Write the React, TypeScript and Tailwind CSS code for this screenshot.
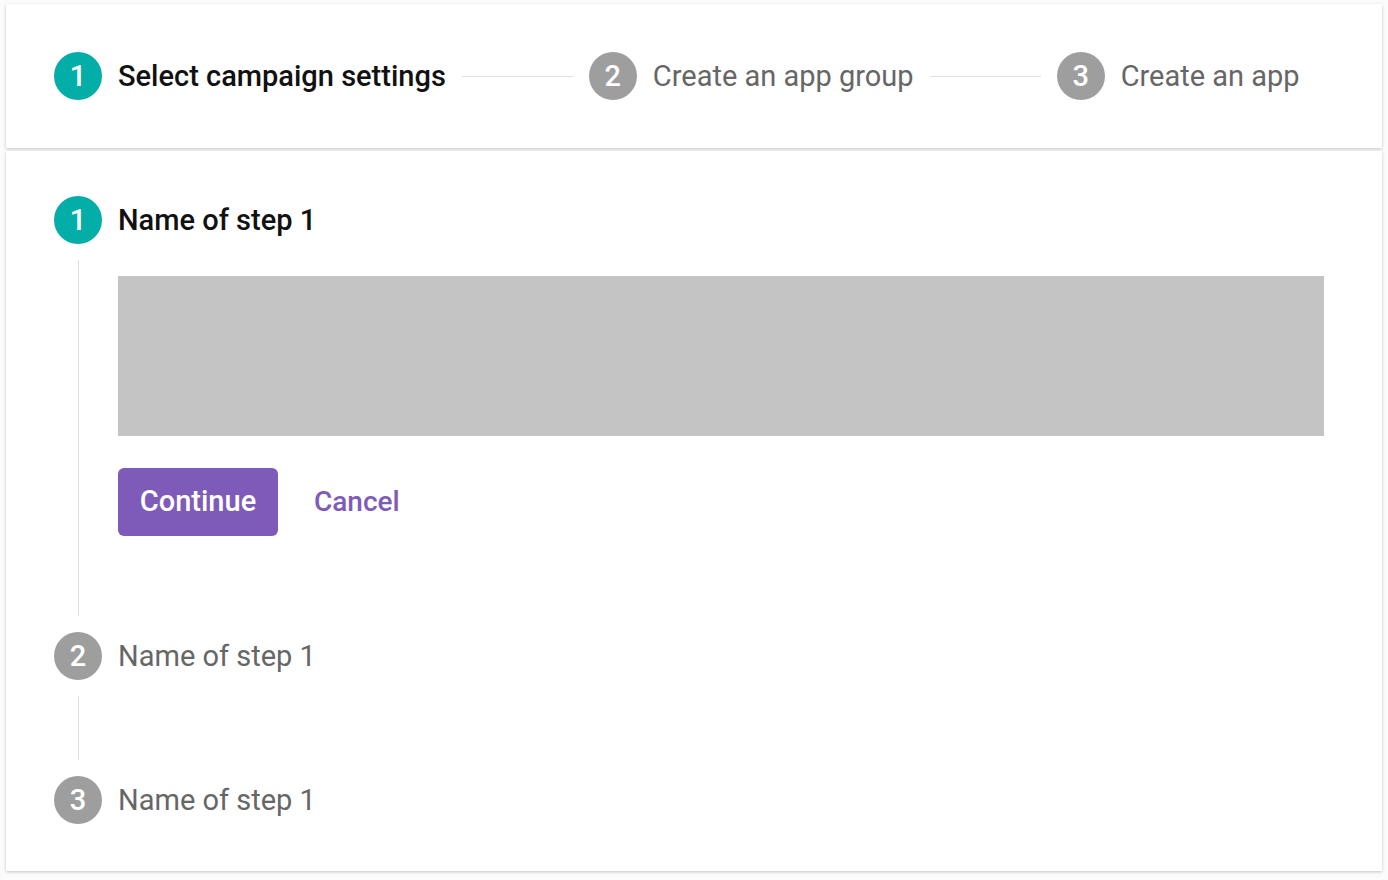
import React from "react";

const font = { fontFamily: "Roboto, 'Noto Sans', sans-serif" };

function Circle({ n, active }: { n: number; active?: boolean }) {
  return (
    <div
      className={
        "flex h-[48px] w-[48px] shrink-0 items-center justify-center rounded-full pt-px text-[29px] font-medium text-white " +
        (active ? "bg-[#03ada8]" : "bg-[#9e9e9e]")
      }
    >
      {n}
    </div>
  );
}

export default function App() {
  return (
    <div className="min-h-screen bg-[#fbfbfb] px-[6px] pt-[4px]" style={font}>
      <div className="flex h-[144px] items-center bg-white pl-[48px] shadow-[0_1px_3px_rgba(0,0,0,0.22)]">
        <Circle n={1} active />
        <span className="ml-[16px] pt-[2px] text-[29px] font-medium text-[#111]">Select campaign settings</span>
        <div className="mx-[16px] h-px w-[111px] bg-[#e0e0e0]" />
        <Circle n={2} />
        <span className="ml-[16px] pt-[2px] text-[29px] text-[#666]">Create an app group</span>
        <div className="mx-[16px] h-px w-[111px] bg-[#e0e0e0]" />
        <Circle n={3} />
        <span className="ml-[16px] pt-[2px] text-[29px] text-[#666]">Create an app</span>
      </div>

      <div className="mt-[3px] flex h-[720px] flex-col bg-white px-[48px] pt-[45px] shadow-[0_1px_3px_rgba(0,0,0,0.22)]">
        <div className="flex items-center">
          <Circle n={1} active />
          <span className="ml-[16px] pt-[2px] text-[29px] font-medium text-[#111]">Name of step 1</span>
        </div>
        <div className="flex">
          <div className="flex w-[48px] shrink-0 justify-center py-[16px]">
            <div className="w-px bg-[#e0e0e0]" />
          </div>
          <div className="ml-[16px] flex-1 pb-[96px] pr-[10px] pt-[32px]">
            <div className="h-[160px] bg-[#c4c4c4]" />
            <div className="mt-[32px] flex items-center">
              <button className="flex h-[68px] w-[160px] items-center justify-center rounded-[6px] bg-[#7e5bb9] text-[29px] font-medium text-white">
                Continue
              </button>
              <button className="ml-[36px] text-[28px] font-medium text-[#7e5bb9]">Cancel</button>
            </div>
          </div>
        </div>
        <div className="flex items-center">
          <Circle n={2} />
          <span className="ml-[16px] pt-[2px] text-[29px] text-[#666]">Name of step 1</span>
        </div>
        <div className="flex h-[96px]">
          <div className="flex w-[48px] shrink-0 justify-center py-[16px]">
            <div className="w-px bg-[#e0e0e0]" />
          </div>
        </div>
        <div className="flex items-center">
          <Circle n={3} />
          <span className="ml-[16px] pt-[2px] text-[29px] text-[#666]">Name of step 1</span>
        </div>
      </div>
    </div>
  );
}
